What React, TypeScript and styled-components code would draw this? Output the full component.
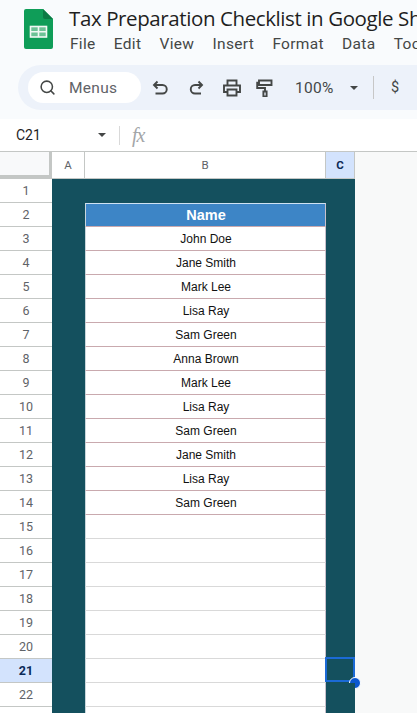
import React from 'react';
import styled, { createGlobalStyle } from 'styled-components';
import { Search } from 'lucide-react';

const names = [
  'John Doe',
  'Jane Smith',
  'Mark Lee',
  'Lisa Ray',
  'Sam Green',
  'Anna Brown',
  'Mark Lee',
  'Lisa Ray',
  'Sam Green',
  'Jane Smith',
  'Lisa Ray',
  'Sam Green',
];

const menus = ['File', 'Edit', 'View', 'Insert', 'Format', 'Data', 'Tools'];
const rowNumbers = Array.from({ length: 23 }, (_, i) => i + 1);

const Global = createGlobalStyle`
  html, body {
    margin: 0;
    height: 100%;
    overflow: hidden;
    background: #f8f9f9;
  }
  #root {
    width: 417px;
    height: 713px;
    overflow: hidden;
    font-family: 'Roboto', 'Liberation Sans', sans-serif;
  }
`;

const Header = styled.header`
  height: 119px;
  box-sizing: border-box;
  background: #f9fbfd;
  padding: 9px 0 0 18px;
  overflow: hidden;
`;

const TitleArea = styled.div`
  display: flex;
  gap: 16px;
  padding-left: 6px;
  height: 56px;
`;

const Titles = styled.div`
  display: flex;
  flex-direction: column;
  white-space: nowrap;
`;

const DocTitle = styled.div`
  font-family: 'Open Sans', 'Liberation Sans', sans-serif;
  font-size: 20.5px;
  line-height: 18px;
  color: #1f1f1f;
  letter-spacing: -0.4px;
`;

const MenuBar = styled.nav`
  display: flex;
  gap: 18.3px;
  margin-top: 7px;
  margin-left: 1px;
  font-size: 15.5px;
  line-height: 20px;
  color: #444746;
  letter-spacing: 0.3px;
`;

const Toolbar = styled.div`
  display: flex;
  align-items: center;
  height: 45px;
  width: 440px;
  border-radius: 23px;
  background: #edf2fa;
  padding-left: 10px;
  color: #444746;
`;

const MenuSearch = styled.div`
  display: flex;
  align-items: center;
  gap: 13px;
  width: 113px;
  height: 31px;
  box-sizing: border-box;
  padding-left: 11px;
  border-radius: 16px;
  background: #fff;
  font-size: 15.5px;
  color: #5f6368;
  letter-spacing: 0.3px;
  margin-right: 10px;
`;

const ToolButton = styled.span<{ $tight?: boolean }>`
  display: flex;
  align-items: center;
  justify-content: center;
  width: 18px;
  margin-left: ${(p) => (p.$tight ? -3 : 0)}px;
  margin-right: 18px;
`;

const Zoom = styled.span`
  font-size: 15.5px;
  letter-spacing: 0.3px;
  margin-left: 3px;
  width: 55px;
`;

const Caret = styled.span`
  width: 0;
  height: 0;
  border-left: 4.5px solid transparent;
  border-right: 4.5px solid transparent;
  border-top: 4.5px solid #444746;
`;

const Divider = styled.span`
  width: 1px;
  height: 23px;
  background: #c7c7c7;
  margin: 0 17px 0 15px;
`;

const Dollar = styled.span`
  font-size: 14.5px;
`;

const FormulaBar = styled.div`
  display: flex;
  align-items: center;
  height: 33px;
  box-sizing: border-box;
  background: #fff;
  border-bottom: 1px solid #c4c7c5;
  padding-left: 16px;
`;

const NameBox = styled.div`
  display: flex;
  align-items: center;
  justify-content: space-between;
  width: 90px;
  font-size: 14px;
  color: #1f1f1f;
`;

const FormulaDivider = styled.span`
  width: 1px;
  height: 19px;
  background: #d9d9d9;
  margin: 0 12px 0 13px;
`;

const Fx = styled.span`
  font-family: 'Liberation Serif', serif;
  font-style: italic;
  font-size: 20px;
  color: #a3a6a8;
  letter-spacing: -1px;
`;

const Row = styled.div<{ $height: number }>`
  display: flex;
  height: ${(p) => p.$height}px;
  box-sizing: border-box;
`;

const Corner = styled.div`
  width: 52px;
  box-sizing: border-box;
  background: #f8f9fa;
  border-right: 3px solid #c4c7c5;
  border-bottom: 4px solid #c4c7c5;
`;

const ColHead = styled.div<{ $width: number; $active?: boolean }>`
  width: ${(p) => p.$width}px;
  box-sizing: border-box;
  display: flex;
  align-items: center;
  justify-content: center;
  font-size: 11.5px;
  background: ${(p) => (p.$active ? '#d3e3fd' : '#fff')};
  color: ${(p) => (p.$active ? '#0b2a57' : '#5f6368')};
  font-weight: ${(p) => (p.$active ? 700 : 400)};
  border-right: 1px solid #c4c7c5;
  border-bottom: 1px solid #c4c7c5;
`;

const RowHead = styled.div<{ $active?: boolean }>`
  width: 52px;
  box-sizing: border-box;
  display: flex;
  align-items: center;
  justify-content: center;
  font-size: 12.5px;
  background: ${(p) => (p.$active ? '#d3e3fd' : '#fff')};
  color: ${(p) => (p.$active ? '#0b2a57' : '#5f6368')};
  font-weight: ${(p) => (p.$active ? 700 : 400)};
  border-bottom: 1px solid #c4c7c5;
`;

const Band = styled.div<{ $width: number }>`
  position: relative;
  width: ${(p) => p.$width}px;
  box-sizing: border-box;
  background: #14505e;
`;

const NameCell = styled.div<{ $kind: string }>`
  width: 241px;
  box-sizing: border-box;
  padding-left: 1px;
  display: flex;
  align-items: center;
  justify-content: center;
  font-family: 'Liberation Sans', sans-serif;
  font-size: ${(p) => (p.$kind === 'head' ? 14.5 : 12)}px;
  font-weight: ${(p) => (p.$kind === 'head' ? 700 : 400)};
  color: ${(p) => (p.$kind === 'head' ? '#fff' : '#111')};
  background: ${(p) => (p.$kind === 'band' ? '#14505e' : p.$kind === 'head' ? '#3d85c6' : '#fff')};
  border-left: 1px solid ${(p) => (p.$kind === 'band' ? '#14505e' : '#c9d6dc')};
  border-right: 1px solid ${(p) => (p.$kind === 'band' ? '#14505e' : '#c9c0cc')};
  border-top: ${(p) => (p.$kind === 'head' ? '1px solid #cfe2f3' : '0')};
  border-bottom: 1px solid
    ${(p) => (p.$kind === 'band' ? '#14505e' : p.$kind === 'empty' ? '#d9d9d9' : '#c9a9ae')};
`;

const Selection = styled.div`
  position: absolute;
  inset: -2px 0 1px -1px;
  border: 2px solid #1b6ad6;
`;

const Handle = styled.span`
  position: absolute;
  right: -8px;
  bottom: -9px;
  width: 10px;
  height: 10px;
  border-radius: 50%;
  background: #0b57d0;
  border: 1px solid #fff;
`;

const Gutter = styled.div`
  flex: 1;
  background: #f8f9f9;
`;

function cellKind(n: number) {
  if (n === 1) return 'band';
  if (n === 2) return 'head';
  if (n <= 14) return 'name';
  return 'empty';
}

function SheetsLogo() {
  return (
    <svg width="29" height="40" viewBox="0 0 29 40" style={{ flex: 'none' }}>
      <path d="M2 0h17l10 10v28a2 2 0 0 1-2 2H2a2 2 0 0 1-2-2V2a2 2 0 0 1 2-2z" fill="#0f9d58" />
      <path d="M19 0l10 10H21a2 2 0 0 1-2-2z" fill="#0b7a45" />
      <rect x="6.500" y="17.500" width="16" height="10.500" fill="#6cc296" stroke="#f1f8f4" strokeWidth="1.600" />
      <path d="M14.500 17.500v10.500M6.500 22.700h16" stroke="#f1f8f4" strokeWidth="1.600" />
    </svg>
  );
}

function ToolIcon({ d }: { d: string }) {
  return (
    <svg width="18" height="18" viewBox="0 0 18 18" fill="none" stroke="currentColor" strokeWidth="1.900">
      <path d={d} />
    </svg>
  );
}

export default function App() {
  return (
    <>
      <Global />
      <Header>
        <TitleArea>
          <SheetsLogo />
          <Titles>
            <DocTitle>Tax Preparation Checklist in Google Sheets</DocTitle>
            <MenuBar>
              {menus.map((m) => (
                <span key={m}>{m}</span>
              ))}
            </MenuBar>
          </Titles>
        </TitleArea>
        <Toolbar>
          <MenuSearch>
            <Search size={17} strokeWidth={2.2} color="#444746" />
            Menus
          </MenuSearch>
          <ToolButton>
            <ToolIcon d="M6.500 2.500 3 6l3.500 3.500M3 6h8.500a4.200 4.200 0 0 1 0 8.500H4.500" />
          </ToolButton>
          <ToolButton>
            <ToolIcon d="M11.500 2.500 15 6l-3.500 3.500M15 6H8a4.200 4.200 0 0 0 0 8.500h6" />
          </ToolButton>
          <ToolButton>
            <ToolIcon d="M4.500 6V1.500h9V6M4.500 13H1V6.500h16V13h-3.500M4.500 10.500h9v6h-9z" />
          </ToolButton>
          <ToolButton $tight>
            <ToolIcon d="M3 1.500h12.500v4.500H3zM3 3.700H1.200v5.300H9v3.500M7.400 12.500h3.200v5H7.400z" />
          </ToolButton>
          <Zoom>100%</Zoom>
          <Caret />
          <Divider />
          <Dollar>$</Dollar>
        </Toolbar>
      </Header>
      <FormulaBar>
        <NameBox>
          C21
          <Caret />
        </NameBox>
        <FormulaDivider />
        <Fx>fx</Fx>
      </FormulaBar>
      <Row $height={27}>
        <Corner />
        <ColHead $width={33}>A</ColHead>
        <ColHead $width={241}>B</ColHead>
        <ColHead $width={29} $active>C</ColHead>
        <Gutter />
      </Row>
      {rowNumbers.map((n) => {
        const kind = cellKind(n);
        return (
          <Row key={n} $height={24}>
            <RowHead $active={n === 21}>{n < 23 ? n : null}</RowHead>
            <Band $width={33} />
            <NameCell $kind={kind}>
              {n === 2 ? 'Name' : kind === 'name' ? names[n - 3] : null}
            </NameCell>
            <Band $width={29}>
              {n === 21 && (
                <Selection>
                  <Handle />
                </Selection>
              )}
            </Band>
            <Gutter />
          </Row>
        );
      })}
    </>
  );
}
